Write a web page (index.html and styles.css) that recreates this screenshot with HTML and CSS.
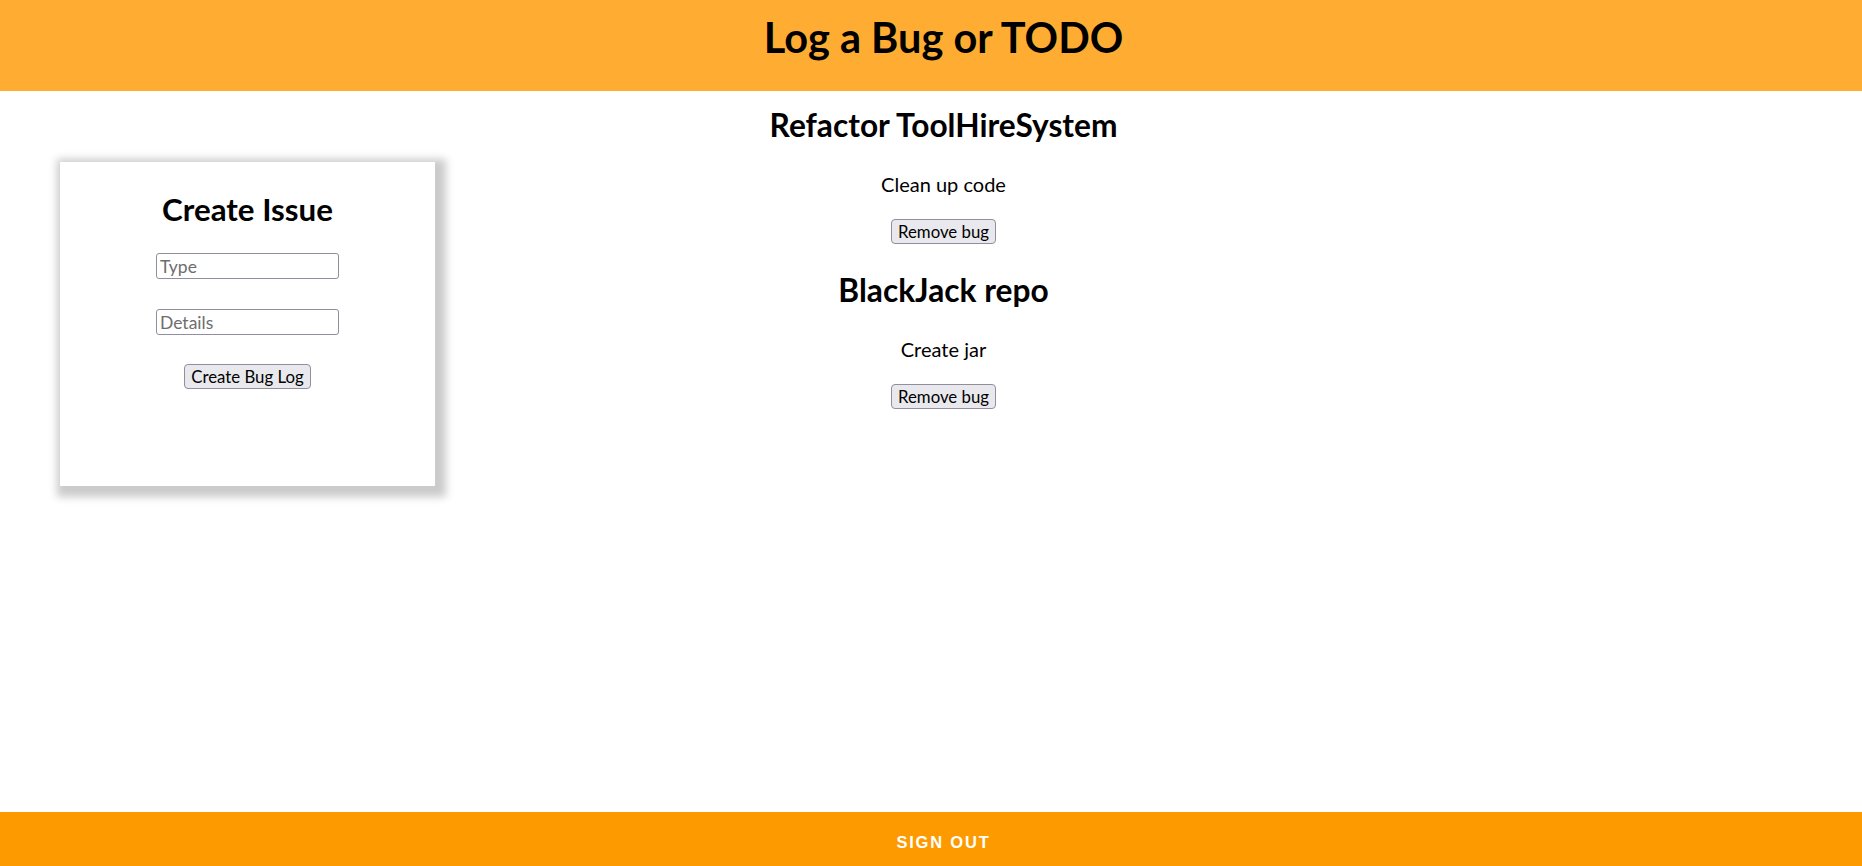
FILE: index.html
```html
<!DOCTYPE html>
<html lang="en">
<head>
<meta charset="utf-8">
<title>Log a Bug or TODO</title>
<link rel="stylesheet" href="styles.css">
</head>
<body>
<header class="topbar">
  <h1 class="topbar-title">Log a Bug or TODO</h1>
</header>
<main class="board">
  <section class="card">
    <h2 class="card-title">Create Issue</h2>
    <form class="issue-form">
      <input class="field" type="text" placeholder="Type">
      <input class="field" type="text" placeholder="Details">
      <button class="btn" type="button">Create Bug Log</button>
    </form>
  </section>
  <ul class="bug-list">
    <li class="bug">
      <h2 class="bug-title">Refactor ToolHireSystem</h2>
      <p class="bug-details">Clean up code</p>
      <button class="btn" type="button">Remove bug</button>
    </li>
    <li class="bug">
      <h2 class="bug-title">BlackJack repo</h2>
      <p class="bug-details">Create jar</p>
      <button class="btn" type="button">Remove bug</button>
    </li>
  </ul>
  <div class="spacer"></div>
</main>
<footer class="footer">
  <button class="signout" type="button">Sign out</button>
</footer>
</body>
</html>
```
FILE: styles.css
```css
* { box-sizing: border-box; }

html, body { height: 100%; }

body {
  margin: 0;
  font-family: Lato, "Open Sans", sans-serif;
  font-size: 20px;
  color: #000;
  background: #fff;
  display: flex;
  flex-direction: column;
  min-height: 100vh;
  overflow: hidden;
}

.topbar {
  background: #ffac33;
  height: 91px;
  padding: 17px 0 0 25px;
  text-align: center;
}

.topbar-title {
  margin: 0;
  font-size: 41.5px;
  line-height: 41px;
  font-weight: 700;
}

.board {
  flex: 1;
  display: grid;
  grid-template-columns: 1fr auto 1fr;
  align-items: start;
  padding: 19px 0 0 25px;
}

.card {
  justify-self: start;
  margin: 52px 0 0 35px;
  width: 375px;
  height: 324px;
  padding-top: 32px;
  background: #fff;
  box-shadow: 4px 4px 8px 7px #cbcbcb;
  display: flex;
  flex-direction: column;
  align-items: center;
}

.card-title {
  margin: 0 0 28px;
  font-size: 31.3px;
  line-height: 31px;
  font-weight: 700;
}

.issue-form {
  display: flex;
  flex-direction: column;
  align-items: center;
}

.field {
  width: 183px;
  height: 26px;
  margin: 0 0 30px;
  padding: 2px 3px;
  font-family: Lato, "Open Sans", sans-serif;
  font-size: 17.5px;
  line-height: 20px;
  border: 1px solid #8f8f9d;
  border-radius: 3px;
  background: #fff;
  color: #000;
}

.field + .field { margin-bottom: 29px; }

.field::placeholder { color: #6d6d6d; }

.btn {
  font-family: Lato, "Open Sans", sans-serif;
  font-size: 16.8px;
  line-height: 19px;
  height: 25px;
  padding: 2px 6.5px;
  color: #000;
  background: #e9e9ed;
  border: 1px solid #8f8f9d;
  border-radius: 4px;
}

.bug-list {
  list-style: none;
  margin: 0;
  padding: 0;
}

.bug {
  display: flex;
  flex-direction: column;
  align-items: center;
  margin-bottom: 31px;
}

.bug-title {
  margin: 0 0 33px;
  font-size: 31.7px;
  line-height: 31px;
  font-weight: 700;
}

.bug-details {
  margin: 0 0 25px;
  font-size: 20px;
  line-height: 20px;
}

.footer {
  height: 54px;
  background: #fd9a00;
}

.signout {
  display: block;
  width: 100%;
  height: 54px;
  margin: 0;
  padding: 6px 0 0 25px;
  border: 0;
  background: transparent;
  color: #fff;
  font-family: "Liberation Sans", Arial, sans-serif;
  font-size: 16.5px;
  line-height: 16px;
  font-weight: 700;
  letter-spacing: 1.8px;
  text-transform: uppercase;
  text-align: center;
}
```
